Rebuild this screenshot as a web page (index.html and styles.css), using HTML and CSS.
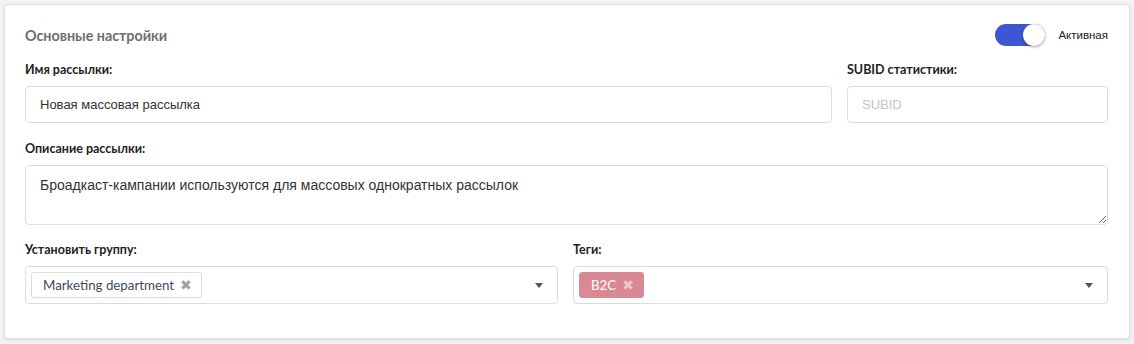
FILE: index.html
```html
<!DOCTYPE html>
<html lang="ru">
  <head>
    <meta charset="UTF-8" />
    <meta name="viewport" content="width=device-width, initial-scale=1.0" />
    <title>Основные настройки</title>
    <link rel="stylesheet" href="styles.css">
  </head>
  <body>
    <div class="card">
      <div class="card-header">
        <div class="card-title">Основные настройки</div>
        <label class="switch">
          <span class="switch-track"><span class="switch-knob"></span></span>
          <span class="switch-label">Активная</span>
        </label>
      </div>

      <div class="row row-main">
        <div class="field">
          <div class="field-label">Имя рассылки:</div>
          <input class="input" type="text" value="Новая массовая рассылка" />
        </div>
        <div class="field">
          <div class="field-label">SUBID статистики:</div>
          <input class="input" type="text" placeholder="SUBID" />
        </div>
      </div>

      <div class="field field-desc">
        <div class="field-label">Описание рассылки:</div>
        <textarea class="input textarea">Броадкаст-кампании используются для массовых однократных рассылок</textarea>
      </div>

      <div class="row row-half">
        <div class="field">
          <div class="field-label">Установить группу:</div>
          <div class="select">
            <span class="chip">Marketing department <span class="chip-x">✖</span></span>
            <span class="caret"></span>
          </div>
        </div>
        <div class="field">
          <div class="field-label">Теги:</div>
          <div class="select">
            <span class="chip chip-red">B2C <span class="chip-x">✖</span></span>
            <span class="caret"></span>
          </div>
        </div>
      </div>
    </div>
  </body>
</html>
```

FILE: styles.css
```css
body {
  margin: 0;
  padding: 4px;
  background: #f3f3f3;
  font-family: "Lato", "Open Sans", sans-serif;
  color: #222;
}

.card {
  background: #fff;
  border: 1px solid #e2e2e2;
  border-radius: 4px;
  box-shadow: 0 1px 3px rgba(0, 0, 0, 0.12);
  padding: 19px 21px 35px 20px;
  height: 335px;
  box-sizing: border-box;
}

.card-header {
  display: flex;
  justify-content: space-between;
  align-items: center;
  height: 22px;
  margin-bottom: 16px;
}

.card-title {
  font-size: 14.3px;
  font-weight: bold;
  color: #6b6f75;
}

.switch {
  display: flex;
  align-items: center;
  gap: 13px;
}

.switch-track {
  display: flex;
  justify-content: flex-end;
  width: 50px;
  height: 22px;
  border-radius: 11px;
  background: #3d56d1;
}

.switch-knob {
  width: 22px;
  height: 22px;
  border-radius: 50%;
  background: #fff;
  box-shadow: 0 1px 3px rgba(0, 0, 0, 0.35);
}

.switch-label {
  font-size: 11.5px;
  color: #222;
  font-family: "Liberation Sans", Arial, sans-serif;
}

.row {
  display: grid;
  gap: 15px;
}

.row-main {
  grid-template-columns: 807px 1fr;
}

.row-half {
  grid-template-columns: 533px 1fr;
}

.field {
  display: flex;
  flex-direction: column;
  margin-bottom: 18px;
}

.field-desc {
  margin-bottom: 17px;
}

.field-label {
  font-size: 12.5px;
  font-weight: bold;
  line-height: 16px;
  margin-bottom: 8px;
  color: #222;
}

.input {
  height: 37px;
  box-sizing: border-box;
  border: 1px solid #dcdcdc;
  border-radius: 4px;
  padding: 0 14px;
  font-family: "Liberation Sans", Arial, sans-serif;
  font-size: 13px;
  color: #333;
  outline: none;
}

.input::placeholder {
  color: #c4c4c4;
}

.textarea {
  height: 60px;
  padding: 11px 14px;
  font-size: 14px;
  resize: vertical;
}

.row-half .field {
  margin-bottom: 0;
}

.select {
  display: flex;
  align-items: center;
  height: 38px;
  box-sizing: border-box;
  border: 1px solid #dcdcdc;
  border-radius: 4px;
  padding: 0 14px 0 5px;
}

.chip {
  display: inline-flex;
  align-items: center;
  gap: 6px;
  height: 26px;
  box-sizing: border-box;
  padding: 0 9px 0 11px;
  border: 1px solid #dcdcdc;
  border-radius: 3px;
  font-size: 13.3px;
  color: #3f4a5a;
}

.chip-x {
  font-family: "DejaVu Sans", sans-serif;
  font-size: 14px;
  color: #a0a0a0;
}

.chip-red {
  background: #d98994;
  border-color: #d98994;
  color: #fff;
}

.chip-red .chip-x {
  color: #efc6cc;
}

.caret {
  margin-left: auto;
  width: 0;
  height: 0;
  border-left: 4px solid transparent;
  border-right: 4px solid transparent;
  border-top: 5px solid #555;
}
```
